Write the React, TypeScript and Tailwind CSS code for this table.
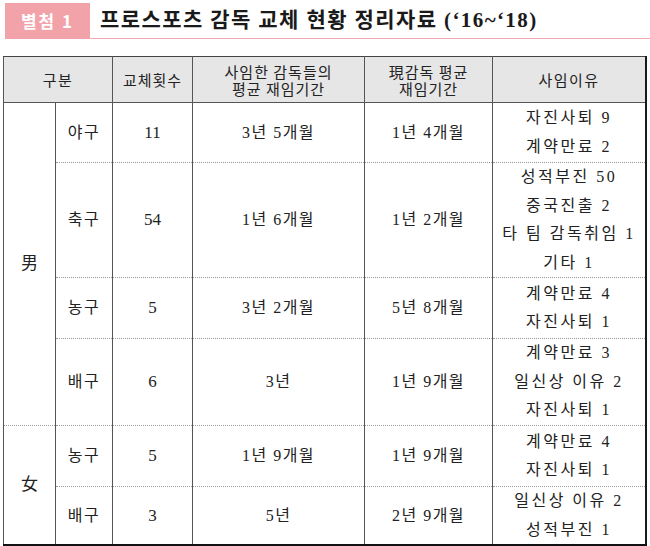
import React from 'react';

const serif = { fontFamily: '"Liberation Serif", "Noto Sans CJK KR", serif' };
const sans = { fontFamily: '"Noto Sans CJK KR", "Noto Sans", sans-serif' };

interface Row {
  sport: string;
  count: string;
  past: string;
  now: string;
  reasons: string[];
  h: string;
}

const male: Row[] = [
  { sport: '야구', count: '11', past: '3년 5개월', now: '1년 4개월', reasons: ['자진사퇴 9', '계약만료 2'], h: 'h-[60px]' },
  { sport: '축구', count: '54', past: '1년 6개월', now: '1년 2개월', reasons: ['성적부진 50', '중국진출 2', '타 팀 감독취임 1', '기타 1'], h: 'h-[115px]' },
  { sport: '농구', count: '5', past: '3년 2개월', now: '5년 8개월', reasons: ['계약만료 4', '자진사퇴 1'], h: 'h-[61px]' },
  { sport: '배구', count: '6', past: '3년', now: '1년 9개월', reasons: ['계약만료 3', '일신상 이유 2', '자진사퇴 1'], h: 'h-[87px]' },
];

const female: Row[] = [
  { sport: '농구', count: '5', past: '1년 9개월', now: '1년 9개월', reasons: ['계약만료 4', '자진사퇴 1'], h: 'h-[61px]' },
  { sport: '배구', count: '3', past: '5년', now: '2년 9개월', reasons: ['일신상 이유 2', '성적부진 1'], h: 'h-[56px]' },
];

const cell = 'text-center align-middle border-l border-l-[#555] p-0';
const th = 'font-normal text-center align-middle p-0 border-l border-l-[#555]';

const DataRow: React.FC<{ row: Row; label?: string; span?: number; last?: boolean }> = ({ row, label, span, last }) => (
  <tr className={`${row.h} ${last ? '' : 'border-b border-dotted border-b-[#9a9a9a]'}`}>
    {label && (
      <td rowSpan={span} className="text-center align-middle text-[17px] text-[#222] p-0" style={serif}>
        {label}
      </td>
    )}
    <td className={cell + ' tracking-[1.5px]'}>{row.sport}</td>
    <td className={cell + ' text-[17px]'}>{row.count}</td>
    <td className={cell + ' tracking-[1.5px]'}>{row.past}</td>
    <td className={cell + ' tracking-[1.5px]'}>{row.now}</td>
    <td className={cell + ' leading-[28.5px] tracking-[2.5px]'}>
      {row.reasons.map((r, i) => (
        <div key={i}>{r}</div>
      ))}
    </td>
  </tr>
);

export default function App() {
  return (
    <div className="w-[650px] h-[546px] bg-white overflow-hidden relative">
      {/* Title bar */}
      <div className="flex items-end pt-[3px] h-[39px]">
        <div
          className="ml-[5px] w-[85px] h-[36px] bg-[#f2a3aa] flex items-center justify-center text-white text-[17px] font-bold tracking-[2px]"
          style={sans}
        >
          별첨 1
        </div>
        <div className="flex-1 h-[36px] border-b border-b-[#f3a9af] flex items-center pl-[10px]">
          <span className="text-[21px] font-semibold text-[#1a1a1a] tracking-[1.4px]" style={serif}>
            프로스포츠 감독 교체 현황 정리자료 (‘16~‘18)
          </span>
        </div>
      </div>

      {/* Table */}
      <div className="mt-[17px] ml-[3px] w-[644px]">
        <table
          className="w-full table-fixed border-collapse border-t border-t-[#444] border-l border-l-[#555] border-r-2 border-r-[#1a1a1a] border-b-2 border-b-[#111] text-[16px] text-[#222]"
          style={serif}
        >
          <colgroup>
            <col className="w-[52px]" />
            <col className="w-[57px]" />
            <col className="w-[80px]" />
            <col className="w-[172px]" />
            <col className="w-[128px]" />
            <col />
          </colgroup>
          <thead>
            <tr className="h-[46px] bg-[#e6e6e6] border-b border-b-[#555] leading-[17px] text-[15px] text-[#222]" style={sans}>
              <th colSpan={2} className="font-normal text-center align-middle p-0 tracking-[1.5px]">구분</th>
              <th className={th + ' tracking-[1px]'}>교체횟수</th>
              <th className={th + ' tracking-[1px]'}>
                <div>사임한 감독들의</div>
                <div>평균 재임기간</div>
              </th>
              <th className={th + ' tracking-[1px]'}>
                <div>現감독 평균</div>
                <div>재임기간</div>
              </th>
              <th className={th + ' tracking-[1.5px]'}>사임이유</th>
            </tr>
          </thead>
          <tbody>
            {male.map((r, i) => (
              <DataRow key={'m' + i} row={r} label={i === 0 ? '男' : undefined} span={male.length} />
            ))}
            {female.map((r, i) => (
              <DataRow
                key={'f' + i}
                row={r}
                label={i === 0 ? '女' : undefined}
                span={female.length}
                last={i === female.length - 1}
              />
            ))}
          </tbody>
        </table>
        <div className="h-[2px] bg-[#ead6a4] -ml-[3px] w-[650px]" />
      </div>
    </div>
  );
}
